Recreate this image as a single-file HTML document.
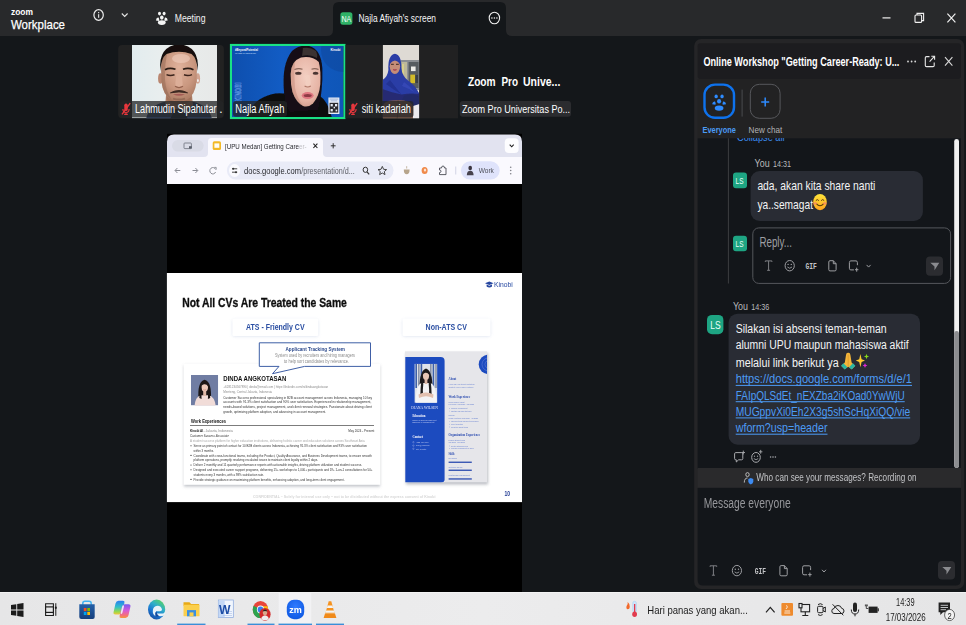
<!DOCTYPE html>
<html lang="id">
<head>
<meta charset="utf-8">
<title>Zoom Workplace</title>
<style>
html,body{margin:0;padding:0;background:#14171a;overflow:hidden}
body{width:966px;height:625px;position:relative;font-family:"Liberation Sans",sans-serif}
svg#ui{position:absolute;left:0;top:0;width:966px;height:625px;display:block}
svg text{font-family:"Liberation Sans",sans-serif}
.b{font-weight:bold}
</style>
</head>
<body>
<svg id="ui" width="966" height="625" viewBox="0 0 966 625">
<defs>
<filter id="bl1" x="-5%" y="-5%" width="110%" height="110%"><feGaussianBlur stdDeviation="0.7"/></filter>
<filter id="bl2" x="-5%" y="-5%" width="110%" height="110%"><feGaussianBlur stdDeviation="1.2"/></filter>
<filter id="bl05" x="-5%" y="-5%" width="110%" height="110%"><feGaussianBlur stdDeviation="0.4"/></filter>
<clipPath id="c1"><rect x="132" y="45" width="85" height="73.3"/></clipPath>
<clipPath id="c2"><rect x="232" y="46" width="111.4" height="71"/></clipPath>
<clipPath id="c3"><rect x="382.7" y="45" width="36.5" height="73.3"/></clipPath>
<linearGradient id="wall1" x1="0" x2="1" y1="0" y2="0"><stop offset="0" stop-color="#e2ecee"/><stop offset=".35" stop-color="#e9eeee"/><stop offset="1" stop-color="#e7e9e8"/></linearGradient>
<radialGradient id="skin1" cx=".5" cy=".35" r=".7"><stop offset="0" stop-color="#e0b29c"/><stop offset=".6" stop-color="#c9977f"/><stop offset="1" stop-color="#a87860"/></radialGradient>
<linearGradient id="blue2" x1="0" x2="1" y1="0" y2="0"><stop offset="0" stop-color="#0e4fae"/><stop offset=".45" stop-color="#125cc4"/><stop offset="1" stop-color="#0f56b8"/></linearGradient>
<radialGradient id="skin2" cx=".5" cy=".4" r=".7"><stop offset="0" stop-color="#f3cfc2"/><stop offset=".7" stop-color="#e6b3a4"/><stop offset="1" stop-color="#c99284"/></radialGradient>
</defs>
<!-- ===== BACKGROUND ===== -->
<rect x="0" y="0" width="966" height="625" fill="#14171a"/>

<!-- ===== TOP BAR ===== -->
<g id="topbar">
<rect x="0" y="0" width="966" height="36" fill="#28292b"/>
<path d="M327 36 Q333 36 333 30 L333 8 Q333 2 339 2 L500 2 Q506 2 506 8 L506 30 Q506 36 512 36 Z" fill="#14171a"/>
<text x="11" y="15.2" font-size="9.2" class="b" fill="#fff" textLength="22" lengthAdjust="spacingAndGlyphs">zoom</text>
<text x="11" y="29" font-size="13.5" fill="#fff" stroke="#fff" stroke-width=".25" textLength="54" lengthAdjust="spacingAndGlyphs">Workplace</text>
<!-- info -->
<ellipse cx="98.600" cy="15" rx="4.700" ry="5.300" fill="none" stroke="#ececec" stroke-width="1.200"/>
<rect x="98.1" y="14.2" width="1.1" height="3.6" fill="#e6e6e6"/><rect x="98.1" y="12" width="1.1" height="1.2" fill="#e6e6e6"/>
<path d="M121.8 13.5 L124.7 16.4 L127.6 13.5" fill="none" stroke="#e6e6e6" stroke-width="1.1"/>
<!-- meeting icon -->
<g fill="#f4f4f4"><ellipse cx="159.500" cy="13.600" rx="1.500" ry="1.800"/><ellipse cx="164.100" cy="13.600" rx="1.500" ry="1.800"/><ellipse cx="161.800" cy="17.600" rx="1.800" ry="2.100"/><path d="M155.900 20.400 Q156.300 17 158.600 17.500 Q159.600 19.200 159 20.900 Z"/><path d="M167.700 20.400 Q167.300 17 165 17.500 Q164 19.200 164.600 20.900 Z"/><ellipse cx="161.800" cy="22.600" rx="3.900" ry="2.300"/></g>
<text x="174.7" y="21.700" font-size="10.600" fill="#f2f2f2" textLength="30.800" lengthAdjust="spacingAndGlyphs">Meeting</text>
<!-- tab content -->
<rect x="340.4" y="12.2" width="12" height="12.6" rx="2.5" fill="#2fb267"/>
<text x="341.5" y="21.8" font-size="9" fill="#fff" textLength="9.8" lengthAdjust="spacingAndGlyphs">NA</text>
<text x="358.5" y="21.800" font-size="10.800" fill="#f5f5f5" textLength="77.500" lengthAdjust="spacingAndGlyphs">Najla Afiyah's screen</text>
<ellipse cx="494.4" cy="18" rx="5.2" ry="5.8" fill="none" stroke="#f0f0f0" stroke-width="1.1"/>
<circle cx="491.9" cy="18" r=".8" fill="#f0f0f0"/><circle cx="494.4" cy="18" r=".8" fill="#f0f0f0"/><circle cx="496.9" cy="18" r=".8" fill="#f0f0f0"/>
<!-- window controls -->
<rect x="882.5" y="17.3" width="8" height="1.2" fill="#f0f0f0"/>
<rect x="915" y="15" width="6.6" height="7.4" rx="1" fill="none" stroke="#f0f0f0" stroke-width="1.1"/>
<path d="M917 15 V13.4 H923.6 V20.6 H921.8" fill="none" stroke="#f0f0f0" stroke-width="1.1"/>
<path d="M947.4 13.6 L955.4 22.4 M955.4 13.6 L947.4 22.4" stroke="#f0f0f0" stroke-width="1.2" fill="none"/>
</g>

<!-- ===== THUMBNAILS ===== -->
<g id="thumbs">
<!-- tile 1 -->
<rect x="118.2" y="45" width="105.7" height="73.3" rx="4" fill="#222222"/>
<g clip-path="url(#c1)">
<rect x="132" y="45" width="85" height="73.3" fill="url(#wall1)"/>
<g filter="url(#bl1)">
<!-- shoulders/shirt -->
<path d="M146 119 Q149 105 166 101.500 L192 101.500 Q209 105 212 119 Z" fill="#36476c"/>
<path d="M170 119 L176 108 L182 108 L188 119 Z" fill="#1f2735"/>
<!-- neck -->
<path d="M166.500 90 L191.500 90 L193 106 Q179 113 165 106 Z" fill="#b4856d"/>
<path d="M166.500 96 Q179 106 191.500 96 L191.500 100 Q179 110 166.500 100 Z" fill="#96664f" opacity=".6"/>
<!-- ears -->
<ellipse cx="160.400" cy="78.500" rx="2.300" ry="5.200" fill="#b98670"/><ellipse cx="197.800" cy="78.500" rx="2.300" ry="5.200" fill="#d2a592"/>
<ellipse cx="197.900" cy="80.500" rx=".9" ry="1.500" fill="#f4f4f4"/>
<!-- face -->
<path d="M161 66 Q161 50 179 49 Q197 50 197 66 L196.500 82 Q195 95 187 99.800 Q179 103.500 171 99.800 Q163 95 161.500 82 Z" fill="url(#skin1)"/>
<!-- side shading -->
<path d="M161 66 Q161 54 168 51 Q164.500 62 165 80 Q166 92 172 100 Q163 95 161.500 82 Z" fill="#8f6450" opacity=".45"/>
<ellipse cx="181" cy="58.500" rx="9" ry="4.500" fill="#f3d2c2" opacity=".55"/>
<!-- hair -->
<path d="M160.300 71 Q158 46 179 44.300 Q200 46 197.700 71 Q197 58 191.500 54 Q179 49.500 166.500 54 Q161 58 160.300 71 Z" fill="#15110e"/>
<!-- brows/eyes -->
<path d="M165 69.800 Q169.500 67.300 175.500 69.300" stroke="#2a1c16" stroke-width="1.700" fill="none"/>
<path d="M183 69.300 Q188.500 67.300 193.500 69.800" stroke="#2a1c16" stroke-width="1.700" fill="none"/>
<path d="M166.500 74.600 Q170 76.300 174.500 74.800" stroke="#3a241c" stroke-width="1.500" fill="none"/>
<path d="M184 74.800 Q188 76.300 192 74.600" stroke="#3a241c" stroke-width="1.500" fill="none"/>
<!-- nose -->
<path d="M176.500 74 Q175 84 175.500 86 Q179 88 182.500 86 Q183 84 181.500 74 Z" fill="#dcae98"/>
<path d="M175 86.300 Q179 88.800 183 86.300" stroke="#94624e" stroke-width="1.200" fill="none"/>
<!-- moustache + mouth -->
<path d="M170.500 92.800 Q179 88.300 187.500 92.800 Q179 91 170.500 92.800 Z" fill="#3e2a22" stroke="#3e2a22" stroke-width="1"/>
<path d="M173 94.300 Q179 97.300 185 94.300 Q179 93.300 173 94.300 Z" fill="#a35a54"/>
<path d="M173 98.600 Q179 100.600 185 98.600" stroke="#7a5444" stroke-width="2" fill="none" opacity=".5"/>
</g>
</g>
<rect x="120" y="101" width="103.500" height="16.400" rx="3" fill="#242526" opacity=".76"/>
<g transform="translate(126 109)">
<path d="M-1.700 -3.800 Q-1.700 -5.400 0 -5.400 Q1.700 -5.400 1.700 -3.800 V0.400 Q1.700 2 0 2 Q-1.700 2 -1.700 0.400 Z" fill="#e8373d"/>
<path d="M-3.100 0 Q-3.100 3.500 0 3.500 Q3.100 3.500 3.100 0 M0 3.500 V5.400 M-1.800 5.400 H1.800" stroke="#e8373d" stroke-width="1.100" fill="none"/>
<path d="M-4 5.400 L4.200 -5.800" stroke="#e8373d" stroke-width="1.400"/>
</g>
<text x="135" y="113.200" font-size="12" fill="#fff" textLength="81.500" lengthAdjust="spacingAndGlyphs">Lahmudin Sipahutar</text>
<text x="219.300" y="113.200" font-size="12" fill="#fff">.</text>

<!-- tile 2 -->
<rect x="231" y="45" width="113.400" height="73" fill="none" stroke="#19e285" stroke-width="2.200"/>
<g clip-path="url(#c2)">
<rect x="232" y="46" width="111.400" height="71" fill="url(#blue2)"/>
<circle cx="343" cy="50" r="22" fill="#0e479c" opacity=".55"/>
<g filter="url(#bl1)">
<!-- body -->
<path d="M246 118 Q252 102 264 97 Q274 92 284 93.500 L320 96 Q328 101 332 118 Z" fill="#0d0c0e"/>
<!-- hijab -->
<path d="M284 92 Q281.500 64 292 51 Q299 44.500 309 46 Q321 49 322.300 68 Q323 92 318 110 L290 112 Q284.500 104 284 92 Z" fill="#141114"/>
<path d="M303 48 Q310 46.500 316 51 Q318 55 317 58 Q310 54 302 56 Z" fill="#5a4a48" opacity=".55"/>
<!-- face -->
<path d="M290.700 74 Q291 61 301 57.500 Q312 55.500 318.800 62 Q321 70 320.300 84 Q319.500 96 313 103.500 Q308 108 303 106 Q296 102 292.500 92 Q290.500 84 290.700 74 Z" fill="url(#skin2)"/>
<path d="M290.700 74 Q291 66 295 61 Q293.500 74 295 88 Q297 98 303 106 Q296 102 292.500 92 Q290.500 84 290.700 74 Z" fill="#c08878" opacity=".45"/>
<!-- brows/eyes -->
<path d="M294.500 69.600 Q298.500 67.800 302.500 69.300" stroke="#8a665a" stroke-width="1.100" fill="none"/>
<path d="M311.500 69.300 Q315 67.800 318.500 69.600" stroke="#8a665a" stroke-width="1.100" fill="none"/>
<ellipse cx="298.300" cy="73.200" rx="3.200" ry="1.500" fill="#4a3430"/>
<ellipse cx="315.600" cy="73.200" rx="2.900" ry="1.500" fill="#4a3430"/>
<!-- nose -->
<path d="M306.500 75 Q305 82 305.500 85 Q308 87 310.500 85 Q311 82 309.500 75 Z" fill="#f2cfc2" opacity=".8"/>
<path d="M304.600 86 Q307.700 88 310.800 86" stroke="#b07868" stroke-width="1.200" fill="none"/>
<!-- mouth -->
<ellipse cx="307.700" cy="95.600" rx="6" ry="3.500" fill="#df7680"/>
<ellipse cx="307.700" cy="95.400" rx="4" ry="1.500" fill="#8e3a44"/>
</g>
<!-- QR -->
<rect x="328.400" y="97.500" width="11" height="16.500" fill="#e6ecf6"/>
<rect x="329.600" y="98.600" width="8.600" height="1" fill="#9fb4d8"/><rect x="330.600" y="100.400" width="6.600" height=".9" fill="#9fb4d8"/>
<rect x="329.600" y="102.800" width="8.600" height="9.800" fill="#2a2a2e"/>
<rect x="330.600" y="104" width="2.200" height="2.400" fill="#e6ecf6"/><rect x="335" y="104" width="2.200" height="2.400" fill="#e6ecf6"/><rect x="330.600" y="109" width="2.200" height="2.400" fill="#e6ecf6"/><rect x="333.600" y="106.800" width="1.400" height="1.600" fill="#e6ecf6"/><rect x="335.600" y="109.600" width="1.600" height="1.800" fill="#e6ecf6"/>
<!-- small header texts -->
<text x="235" y="50.800" font-size="2.600" class="b" fill="#fff" textLength="23" lengthAdjust="spacingAndGlyphs">#BeyondPotential</text>
<text x="235" y="53.800" font-size="2.200" fill="#cfe0ff" textLength="21" lengthAdjust="spacingAndGlyphs">UP MEDAN WORKSHOP</text>
<text x="330.500" y="51" font-size="2.600" class="b" fill="#fff" textLength="10" lengthAdjust="spacingAndGlyphs">Kinobi</text>
<text transform="translate(240.500 101.500) rotate(-90)" font-size="9" class="b" fill="none" stroke="#6a9ee8" stroke-width=".6" textLength="19" lengthAdjust="spacingAndGlyphs">KINOBI</text>
</g>
<rect x="233" y="101" width="54" height="15.800" rx="3" fill="#242526" opacity=".76"/>
<text x="235.300" y="113.200" font-size="12" fill="#fff" textLength="49" lengthAdjust="spacingAndGlyphs">Najla Afiyah</text>

<!-- tile 3 -->
<rect x="345.500" y="45" width="112.600" height="73.300" fill="#212122"/>
<g clip-path="url(#c3)">
<rect x="382.700" y="45" width="36.500" height="73.300" fill="#dedad4"/>
<g filter="url(#bl05)">
<!-- cabinet -->
<rect x="400.500" y="60" width="19" height="30" fill="#8a8e92"/>
<rect x="401.500" y="62" width="5.600" height="26" fill="#bdb99a"/>
<rect x="402" y="64" width="2" height="10" fill="#d8cf8a"/>
<rect x="408.600" y="62" width="10" height="26" fill="#565b60"/>
<rect x="411" y="66.500" width="4.600" height="4.600" fill="#ecece8"/>
<rect x="410.300" y="74.600" width="4.800" height="8.600" fill="#d2bb2c"/>
<rect x="415.400" y="75" width="2.600" height="8" fill="#3a3f44"/>
<!-- body -->
<path d="M382 84 Q386 78 392 76 L404 80 Q414 84 419.500 94 L419.500 119 L382 119 Z" fill="#252c72"/>
<!-- hijab -->
<path d="M388.400 70 Q387.600 55 394.900 53.700 Q401.600 54.600 401.300 68 Q402 76 408 80.500 Q416 86 419 94 Q410 93 401.600 94.600 Q391 92.500 382.500 89 L382.500 80 Q387.600 77 388.400 70 Z" fill="#2b3da6"/>
<path d="M390 80 Q396 88 401.600 94.600 Q394 90 386 84 Z" fill="#1f2e8a" opacity=".7"/>
<path d="M404 82 Q410 86 414 92 Q408 88 402 86 Z" fill="#3a4ec0" opacity=".6"/>
<!-- face -->
<ellipse cx="394.900" cy="66.300" rx="5.200" ry="7.600" fill="#c58d78"/>
<path d="M389.700 64 Q389.900 57.500 394.900 57.300 Q400 57.500 400.100 64 Q397.500 60.500 394.900 60.500 Q392.300 60.500 389.700 64 Z" fill="#2b3da6"/>
<path d="M391 64.300 H393.800 M396 64.300 H398.800" stroke="#3e261e" stroke-width="1"/>
<path d="M393.200 69.600 Q394.900 70.600 396.600 69.600" stroke="#a8384a" stroke-width="1.200" fill="none"/>
<!-- arm and hands -->
<path d="M404 96 Q414 92 419.500 97 L419.500 107 Q410 109 400 104 Z" fill="#222968"/>
<path d="M383 106 Q384 101 392 100.500 Q402 99.500 408 101.500 Q413 103 413 108 L413 119 L383 119 Z" fill="#8a6452"/>
<path d="M398 100 Q399 106 397 119" stroke="#5e4236" stroke-width=".8" fill="none"/>
<path d="M413 106 L419.500 104 L419.500 119 L413 119 Z" fill="#ecebee"/>
</g>
</g>
<rect x="347" y="101" width="66.500" height="16.400" rx="3" fill="#242526" opacity=".76"/>
<g transform="translate(353 109)">
<path d="M-1.700 -3.800 Q-1.700 -5.400 0 -5.400 Q1.700 -5.400 1.700 -3.800 V0.400 Q1.700 2 0 2 Q-1.700 2 -1.700 0.400 Z" fill="#e8373d"/>
<path d="M-3.100 0 Q-3.100 3.500 0 3.500 Q3.100 3.500 3.100 0 M0 3.500 V5.400 M-1.800 5.400 H1.800" stroke="#e8373d" stroke-width="1.100" fill="none"/>
<path d="M-4 5.400 L4.200 -5.800" stroke="#e8373d" stroke-width="1.400"/>
</g>
<text x="361.700" y="113.200" font-size="12" fill="#fff" textLength="49.200" lengthAdjust="spacingAndGlyphs">siti kadariah</text>

<!-- tile 4 -->
<text y="85.700" font-size="13" class="b" fill="#fff"><tspan x="467.900" textLength="27.800" lengthAdjust="spacingAndGlyphs">Zoom</tspan><tspan x="501.500" textLength="16.500" lengthAdjust="spacingAndGlyphs">Pro</tspan><tspan x="523" textLength="37.300" lengthAdjust="spacingAndGlyphs">Unive...</tspan></text>
<rect x="459.800" y="101" width="111.200" height="15.700" rx="3" fill="#2b2c2f"/>
<text x="462" y="113" font-size="11.500" fill="#fff" textLength="108" lengthAdjust="spacingAndGlyphs">Zoom Pro Universitas Po...</text>
</g>

<!-- ===== SHARED SCREEN ===== -->
<g id="share">
<rect x="167" y="133.800" width="355" height="458.200" fill="#000"/>
<!-- browser chrome -->
<path d="M167 184 V141.500 Q167 134.500 174 134.500 H515 Q522 134.500 522 141.500 V184 Z" fill="#e2e3f0"/>
<path d="M167 184 V157 H204 Q208 157 208 153 V141.500 Q208 138 211.500 138 H319.500 Q323 138 323 141.500 V153 Q323 157 327 157 H522 V184 Z" fill="#faf9fe"/>
<g filter="url(#bl05)">
<rect x="172" y="140" width="31.700" height="11.600" rx="5.800" fill="#d9dbe6"/>
<rect x="184" y="143" width="7.400" height="5.600" rx=".8" fill="none" stroke="#6a6f7a" stroke-width=".8"/>
<rect x="189" y="146.200" width="2.800" height="2.400" fill="#5a5f6a"/>
<rect x="212.700" y="141.300" width="8.300" height="8.700" rx="1.600" fill="#f2b928"/>
<rect x="214.400" y="143.400" width="4.900" height="4.400" fill="#fffdf5"/>
<text x="225" y="148.600" font-size="8" fill="#2a2b30" textLength="81.500" lengthAdjust="spacingAndGlyphs">[UPU Medan] Getting Career-</text>
<rect x="299" y="139" width="10" height="14" fill="#faf9fe" opacity=".7"/>
<path d="M313.400 143.600 L317.400 148 M317.400 143.600 L313.400 148" stroke="#222" stroke-width="1.100"/>
<path d="M330.800 145.800 H335.600 M333.200 143.200 V148.400" stroke="#333" stroke-width="1"/>
<rect x="504.800" y="138.200" width="13.800" height="14.800" rx="4" fill="#fdfdff"/>
<path d="M509.700 144.600 L511.700 146.800 L513.700 144.600" stroke="#222" stroke-width="1.100" fill="none"/>
<!-- toolbar -->
<path d="M180.300 170.500 H175.200 M177.400 168 L175 170.500 L177.400 173" stroke="#8a8c94" stroke-width="1" fill="none"/>
<path d="M192.500 170.500 H197.600 M195.400 168 L197.800 170.500 L195.400 173" stroke="#8a8c94" stroke-width="1" fill="none"/>
<path d="M215.600 169.500 A3 3.200 0 1 0 215.600 172" stroke="#8a8c94" stroke-width="1" fill="none"/>
<path d="M214.300 167.400 H216.200 V169.600" stroke="#8a8c94" stroke-width=".9" fill="none"/>
<rect x="226.900" y="161.400" width="166.600" height="18.200" rx="9" fill="#e9ebf7"/>
<ellipse cx="234.600" cy="170.500" rx="5.600" ry="6.400" fill="#fbfbff"/>
<path d="M232 168.800 H237.200 M232 172.200 H237.200" stroke="#333" stroke-width=".9"/>
<circle cx="233.200" cy="168.800" r="1" fill="#333"/><circle cx="236" cy="172.200" r="1" fill="#333"/>
<text x="244" y="173.600" font-size="9" fill="#1f2024" textLength="57" lengthAdjust="spacingAndGlyphs">docs.google.com</text>
<text x="301.2" y="173.600" font-size="9" fill="#5f6168" textLength="53.6" lengthAdjust="spacingAndGlyphs">/presentation/d...</text>
<ellipse cx="365.400" cy="169.800" rx="2.300" ry="2.600" fill="none" stroke="#333" stroke-width="1"/><path d="M367 171.800 L369.200 174.300" stroke="#333" stroke-width="1.200"/>
<path d="M382.300 166.400 L383.600 169.300 L386.600 169.600 L384.300 171.600 L385 174.600 L382.300 173 L379.600 174.600 L380.300 171.600 L378 169.600 L381 169.300 Z" fill="none" stroke="#333" stroke-width=".9"/>
<path d="M403.800 169.500 H409.600 Q409.600 174.300 406.700 174.300 Q403.800 174.300 403.800 169.500 Z" fill="#b7a58c"/><path d="M406.700 166.200 V168.500" stroke="#b7a58c" stroke-width=".8"/>
<ellipse cx="424.600" cy="170.500" rx="3" ry="3.600" fill="#f08a4b"/><ellipse cx="425" cy="170" rx="1.200" ry="1.500" fill="#fde4d0"/>
<path d="M439.500 168 H441.500 Q441.500 166 443 166 Q444.500 166 444.500 168 H446 V174.600 H439.500 V172.600 Q441 172.600 441 171.300 Q441 170 439.500 170 Z" fill="none" stroke="#4a4c55" stroke-width=".9"/>
<rect x="455.400" y="166.500" width=".8" height="8" fill="#c8cbe0"/>
<rect x="461" y="161.200" width="38.700" height="18.400" rx="9.200" fill="#dfe3fb"/>
<ellipse cx="470.200" cy="168" rx="1.800" ry="2.200" fill="#3a3540"/><path d="M466.800 175.200 Q467 170.800 470.200 170.800 Q473.400 170.800 473.600 175.200 Z" fill="#46424e"/>
<text x="478.700" y="173.300" font-size="7.800" fill="#4a4c55" textLength="15.200" lengthAdjust="spacingAndGlyphs">Work</text>
<circle cx="510.700" cy="167.200" r=".8" fill="#808289"/><circle cx="510.700" cy="170.500" r=".8" fill="#808289"/><circle cx="510.700" cy="173.800" r=".8" fill="#808289"/>
</g>
<!-- slide -->
<rect x="166.900" y="273" width="355.100" height="229.100" fill="#fff"/>
<g id="slide">
<filter id="sh" x="-10%" y="-20%" width="120%" height="150%"><feGaussianBlur stdDeviation="1.6"/></filter>
<clipPath id="cph"><rect x="191" y="375" width="27.2" height="30.4"/></clipPath>
<clipPath id="cnv"><rect x="405" y="351.2" width="82" height="131.4"/></clipPath>
<clipPath id="cph2"><rect x="414.4" y="363.8" width="23" height="39"/></clipPath>
<g filter="url(#bl05)">
<path d="M485 283.2 L489.3 281.6 L493.6 283.2 L489.3 284.9 Z M486.6 284.6 V286.6 Q489.3 288.6 492 286.6 V284.6 L489.3 285.7 Z" fill="#2546a0"/>
<text x="494" y="287" font-size="6.8" fill="#2546a0" textLength="18.7" lengthAdjust="spacingAndGlyphs">Kinobi</text>
<text x="182.2" y="307.4" font-size="13.4" class="b" fill="#111" stroke="#111" stroke-width=".35" textLength="164.7" lengthAdjust="spacingAndGlyphs">Not All CVs Are Treated the Same</text>
<rect x="232.4" y="319.6" width="85.900" height="17" rx="2" fill="#c9d2e8" opacity=".6" filter="url(#sh)"/>
<rect x="232.400" y="318.600" width="85.900" height="17.400" rx="1.500" fill="#fff"/>
<text x="246" y="330.2" font-size="8.6" class="b" fill="#2a4ea2" textLength="58.6" lengthAdjust="spacingAndGlyphs">ATS - Friendly CV</text>
<rect x="402.5" y="319.6" width="88" height="17" rx="2" fill="#c9d2e8" opacity=".6" filter="url(#sh)"/>
<rect x="402.500" y="318.600" width="88" height="17.400" rx="1.500" fill="#fff"/>
<text x="425.6" y="330.2" font-size="8.6" class="b" fill="#2a4ea2" textLength="41.3" lengthAdjust="spacingAndGlyphs">Non-ATS CV</text>
<rect x="184" y="365.5" width="196" height="121" fill="#8a8f99" opacity=".55" filter="url(#sh)"/>
<rect x="183.600" y="363.800" width="196.700" height="121" fill="#fff"/>
<path d="M259.300 342.800 H370.500 V366.400 H304.600 L272.500 373.700 L279 366.400 H259.300 Z" fill="#fff" stroke="#3f5fa6" stroke-width="1"/>
<text x="285.5" y="351.1" font-size="6" class="b" fill="#2c4a8c" textLength="59.5" lengthAdjust="spacingAndGlyphs">Applicant Tracking System</text>
<text x="275" y="357.2" font-size="5" fill="#8a8a8a" textLength="80" lengthAdjust="spacingAndGlyphs">System used by recruiters and hiring managers</text>
<text x="284" y="362.8" font-size="5" fill="#8a8a8a" textLength="65" lengthAdjust="spacingAndGlyphs">to help sort candidates by relevance.</text>
<g clip-path="url(#cph)"><rect x="191" y="375" width="27.200" height="30.400" fill="#6f7da3"/>
<path d="M198.600 400 Q197 382 204.600 379.800 Q212.200 382 210.800 400 Z" fill="#1b1718"/>
<path d="M194.500 406 Q195.500 396.500 201 395.300 L208.500 395.300 Q214.500 396.500 215.800 406 Z" fill="#f1dcd8"/>
<rect x="203.200" y="391" width="3" height="5" fill="#e0b9a8"/>
<ellipse cx="204.700" cy="387.300" rx="3.300" ry="4.300" fill="#ecc9ba"/>
<path d="M201.200 386.500 Q201.200 382.300 204.700 382.300 Q208.300 382.300 208.200 386.500 Q206.500 383.800 204 384.300 Q202 384.600 201.200 386.500 Z" fill="#1b1718"/>
<path d="M199.300 398 Q199.600 390 201.300 386 L201.800 392 Q201.300 396 201.600 399 Z M210.200 398 Q209.900 390 208.200 386 L207.700 392 Q208.200 396 207.900 399 Z" fill="#1b1718"/>
<path d="M203.300 389.600 Q204.700 390.500 206.100 389.600" stroke="#c0706a" stroke-width=".5" fill="none"/>
</g>
<text x="223.3" y="381.4" font-size="7.2" class="b" fill="#111" textLength="63" lengthAdjust="spacingAndGlyphs">DINDA ANGKOTASAN</text>
<text x="223.3" y="387.6" font-size="3.4" fill="#8e8e8e" textLength="105" lengthAdjust="spacingAndGlyphs">+6281234567890 | dinda@email.com | https://linkedin.com/in/dindaangkotasan</text>
<text x="223.3" y="392.9" font-size="3.4" fill="#8e8e8e" textLength="48.7" lengthAdjust="spacingAndGlyphs">Menteng, Central Jakarta, Indonesia</text>
<text x="223.3" y="398.6" font-size="3.6" fill="#333" textLength="148.7" lengthAdjust="spacingAndGlyphs">Customer Success professional specializing in B2B account management across Indonesia, managing 10 key</text>
<text x="223.3" y="403.3" font-size="3.6" fill="#333" textLength="148" lengthAdjust="spacingAndGlyphs">accounts with 91.3% client satisfaction and 90% user satisfaction. Experienced in relationship management,</text>
<text x="223.3" y="408" font-size="3.6" fill="#333" textLength="148.5" lengthAdjust="spacingAndGlyphs">needs-based solutions, project management, and client renewal strategies. Passionate about driving client</text>
<text x="223.3" y="412.7" font-size="3.6" fill="#333" textLength="102.7" lengthAdjust="spacingAndGlyphs">growth, optimizing platform adoption, and advancing in account management.</text>
<text x="191" y="423.4" font-size="5.4" class="b" fill="#111" textLength="35" lengthAdjust="spacingAndGlyphs">Work Experiences</text>
<rect x="190" y="425.200" width="184" height=".7" fill="#444"/>
<text x="190" y="431.5" font-size="3.4" class="b" fill="#222" textLength="13" lengthAdjust="spacingAndGlyphs">Kinobi AI</text>
<text x="203.6" y="431.5" font-size="3.4" fill="#888" textLength="29.2" lengthAdjust="spacingAndGlyphs">- Jakarta, Indonesia</text>
<text x="348.3" y="431.5" font-size="3.4" fill="#333" textLength="26" lengthAdjust="spacingAndGlyphs">May 2024 - Present</text>
<text x="190" y="436.8" font-size="3.5" fill="#333" textLength="38.8" lengthAdjust="spacingAndGlyphs" font-style="italic">Customer Success Associate</text>
<text x="190" y="441.7" font-size="3.4" fill="#a8a8a8" textLength="174.6" lengthAdjust="spacingAndGlyphs">A student success platform for higher education institutions, delivering holistic career and education solutions across Southeast Asia</text>
<circle cx="191" cy="445.79999999999995" r=".55" fill="#222"/>
<text x="193.6" y="446.9" font-size="3.5" fill="#333" textLength="173.4" lengthAdjust="spacingAndGlyphs">Serve as primary point of contact for 10 B2B clients across Indonesia, achieving 91.3% client satisfaction and 93% user satisfaction</text>
<text x="193.6" y="451.7" font-size="3.5" fill="#333" textLength="20.4" lengthAdjust="spacingAndGlyphs">within 3 months.</text>
<circle cx="191" cy="455.4" r=".55" fill="#222"/>
<text x="193.6" y="456.5" font-size="3.5" fill="#333" textLength="178.3" lengthAdjust="spacingAndGlyphs">Coordinate with cross-functional teams, including the Product, Quality Assurance, and Business Development teams, to ensure smooth</text>
<text x="193.6" y="461.3" font-size="3.5" fill="#333" textLength="124.4" lengthAdjust="spacingAndGlyphs">platform operations, promptly resolving escalated issues to maintain client loyalty within 2 days.</text>
<circle cx="191" cy="465.0" r=".55" fill="#222"/>
<text x="193.6" y="466.1" font-size="3.5" fill="#333" textLength="168.4" lengthAdjust="spacingAndGlyphs">Deliver 2 monthly and 11 quarterly performance reports with actionable insights, driving platform utilization and student success.</text>
<circle cx="191" cy="469.79999999999995" r=".55" fill="#222"/>
<text x="193.6" y="470.9" font-size="3.5" fill="#333" textLength="179" lengthAdjust="spacingAndGlyphs">Designed and executed career support programs, delivering 15+ workshops to 1,000+ participants and 19+ 1-on-1 consultations for 50+</text>
<text x="193.6" y="475.7" font-size="3.5" fill="#333" textLength="70.4" lengthAdjust="spacingAndGlyphs">students every 3 months, with a 98% satisfaction rate.</text>
<circle cx="191" cy="479.4" r=".55" fill="#222"/>
<text x="193.6" y="480.5" font-size="3.5" fill="#333" textLength="150.9" lengthAdjust="spacingAndGlyphs">Provide strategic guidance on maximizing platform benefits, enhancing adoption, and long-term client engagement.</text>
<text x="253" y="498" font-size="4.2" class="b" fill="#d6d6d6" textLength="182.4" lengthAdjust="spacingAndGlyphs">CONFIDENTIAL – Solely for internal use only – not to be distributed without the express consent of Kinobi</text>
<text x="504.4" y="495.9" font-size="7" class="b" fill="#1f3a93" textLength="5.6" lengthAdjust="spacingAndGlyphs">10</text>
<rect x="406" y="353" width="82" height="131.400" fill="#8a8f99" opacity=".6" filter="url(#sh)"/>
<g clip-path="url(#cnv)">
<rect x="405" y="351.200" width="82" height="131.400" fill="#e6e6ea"/>
<path d="M405.300 357 H440.600 Q444.600 357 444.600 361 V479.300 Q444.600 482.600 441 482.600 H405.300 Z" fill="#1f4bbf"/>
<circle cx="488.500" cy="364.400" r="9.800" fill="#1f4bbf"/>
<circle cx="488.500" cy="364.400" r="6.500" fill="none" stroke="#5a7ad6" stroke-width=".6"/><circle cx="488.500" cy="364.400" r="3.600" fill="none" stroke="#5a7ad6" stroke-width=".6"/>
<g clip-path="url(#cph2)"><rect x="414.400" y="363.800" width="23" height="39" fill="#dfe3ea"/>
<rect x="415.4" y="364" width="1.600" height="24" fill="#3d5fa8"/>
<rect x="418" y="364" width="1.600" height="24" fill="#8a93a8"/>
<rect x="420.6" y="364" width="1.600" height="24" fill="#3d5fa8"/>
<rect x="430" y="364" width="1.600" height="24" fill="#8a93a8"/>
<rect x="432.6" y="364" width="1.600" height="24" fill="#3d5fa8"/>
<rect x="435.2" y="364" width="1.600" height="24" fill="#8a93a8"/>
<path d="M419.600 396 Q418.300 371 426 368.600 Q433.700 371 432.400 396 Z" fill="#1d1a1c"/>
<path d="M415.500 403 Q416 384.500 421.500 383 L430.500 383 Q436 384.500 436.800 403 Z" fill="#f3f3f5"/>
<rect x="424.600" y="379.500" width="2.800" height="4.500" fill="#dcb7a6"/>
<ellipse cx="426" cy="375.800" rx="3.100" ry="4.200" fill="#e8c6b6"/>
<path d="M422.700 375 Q422.700 370.600 426 370.600 Q429.400 370.600 429.300 375 Q427.600 372.300 425.300 372.800 Q423.400 373.100 422.700 375 Z" fill="#1d1a1c"/>
<path d="M420.400 394 Q420.600 382 422.800 374.500 L423.300 384 Q422.600 390 423 395 Z M431.600 394 Q431.400 382 429.200 374.500 L428.700 384 Q429.400 390 429 395 Z" fill="#1d1a1c"/>
<path d="M418.500 394.500 Q426 390.500 433.500 394.500 L433 398 Q426 394.500 419 398 Z" fill="#e2bfae"/>
</g>
<text x="411.2" y="409.3" font-size="3.8" style="font-family:'Liberation Serif',serif" fill="#dfe6fb" textLength="26.8" lengthAdjust="spacingAndGlyphs">DIANA WILSEN</text>
<text x="412.4" y="417.3" font-size="3.8" style="font-family:'Liberation Serif',serif" font-weight="bold" fill="#fff" textLength="13" lengthAdjust="spacingAndGlyphs">Education</text>
<text x="412.4" y="420.8" font-size="2.2" fill="#c5d2f5" textLength="24" lengthAdjust="spacingAndGlyphs">Bachelor of Business Management</text>
<text x="412.4" y="423.3" font-size="2.2" fill="#c5d2f5" textLength="22" lengthAdjust="spacingAndGlyphs">Bachelor of Management</text>
<text x="412.4" y="438.2" font-size="3.8" style="font-family:'Liberation Serif',serif" font-weight="bold" fill="#fff" textLength="10.6" lengthAdjust="spacingAndGlyphs">Contact</text>
<circle cx="413.400" cy="442.2" r=".7" fill="none" stroke="#c5d2f5" stroke-width=".3"/>
<text x="416" y="443" font-size="2.2" fill="#c5d2f5" textLength="12.5" lengthAdjust="spacingAndGlyphs">+123-456-7890</text>
<circle cx="413.400" cy="445.59999999999997" r=".7" fill="none" stroke="#c5d2f5" stroke-width=".3"/>
<text x="416" y="446.4" font-size="2.2" fill="#c5d2f5" textLength="13.5" lengthAdjust="spacingAndGlyphs">hello@email.com</text>
<circle cx="413.400" cy="448.8" r=".7" fill="none" stroke="#c5d2f5" stroke-width=".3"/>
<text x="416" y="449.6" font-size="2.2" fill="#c5d2f5" textLength="10.5" lengthAdjust="spacingAndGlyphs">City, Country</text>
<text x="448.6" y="380.4" font-size="3.8" style="font-family:'Liberation Serif',serif" font-weight="bold" fill="#2a4bb0" textLength="7.6" lengthAdjust="spacingAndGlyphs">About</text>
<text x="448.6" y="385.2" font-size="2.2" fill="#5f7bd0" textLength="26" lengthAdjust="spacingAndGlyphs">I am a final year student in strategic</text>
<text x="448.6" y="388.2" font-size="2.2" fill="#5f7bd0" textLength="25" lengthAdjust="spacingAndGlyphs">growth to exceed career outcome</text>
<text x="448.6" y="398.1" font-size="3.8" style="font-family:'Liberation Serif',serif" font-weight="bold" fill="#2a4bb0" textLength="21.6" lengthAdjust="spacingAndGlyphs">Work Experience</text>
<text x="448.6" y="403" font-size="2.1" fill="#5f7bd0" textLength="16" lengthAdjust="spacingAndGlyphs">Senior Media Analyst</text>
<text x="448.6" y="405.2" font-size="2.1" fill="#5f7bd0" textLength="25.4" lengthAdjust="spacingAndGlyphs">PT Kinobi | May 2023 - Mar 2025</text>
<circle cx="449.600" cy="408.40000000000003" r=".35" fill="#5f7bd0"/>
<text x="451" y="409.1" font-size="2.1" fill="#5f7bd0" textLength="16.5" lengthAdjust="spacingAndGlyphs">Improve engagement</text>
<circle cx="449.600" cy="411.0" r=".35" fill="#5f7bd0"/>
<text x="451" y="411.7" font-size="2.1" fill="#5f7bd0" textLength="20.5" lengthAdjust="spacingAndGlyphs">Maintain and build strategies</text>
<text x="448.6" y="416.3" font-size="2.1" fill="#5f7bd0" textLength="6" lengthAdjust="spacingAndGlyphs">Manager</text>
<text x="448.6" y="418.7" font-size="2.1" fill="#5f7bd0" textLength="29.4" lengthAdjust="spacingAndGlyphs">Kinobi Ventures | Jan 2022 - Apr 2023</text>
<circle cx="449.600" cy="421.5" r=".35" fill="#5f7bd0"/>
<text x="451" y="422.2" font-size="2.1" fill="#5f7bd0" textLength="27.6" lengthAdjust="spacingAndGlyphs">Implement and document procedures</text>
<circle cx="449.600" cy="424.2" r=".35" fill="#5f7bd0"/>
<text x="451" y="424.9" font-size="2.1" fill="#5f7bd0" textLength="12" lengthAdjust="spacingAndGlyphs">Meet monthly</text>
<circle cx="449.600" cy="426.90000000000003" r=".35" fill="#5f7bd0"/>
<text x="451" y="427.6" font-size="2.1" fill="#5f7bd0" textLength="17" lengthAdjust="spacingAndGlyphs">Lead the audit team</text>
<text x="448.6" y="435.8" font-size="3.8" style="font-family:'Liberation Serif',serif" font-weight="bold" fill="#2a4bb0" textLength="31.4" lengthAdjust="spacingAndGlyphs">Organization Experience</text>
<text x="448.6" y="440.6" font-size="2.1" fill="#5f7bd0" textLength="16.4" lengthAdjust="spacingAndGlyphs">Design Student Club</text>
<text x="448.6" y="442.7" font-size="2.1" fill="#5f7bd0" textLength="16.4" lengthAdjust="spacingAndGlyphs">Jan 2019 - Dec 2019</text>
<circle cx="449.600" cy="445.90000000000003" r=".35" fill="#5f7bd0"/>
<text x="451" y="446.6" font-size="2.1" fill="#5f7bd0" textLength="17" lengthAdjust="spacingAndGlyphs">Create Instagram Feed</text>
<circle cx="449.600" cy="448.3" r=".35" fill="#5f7bd0"/>
<text x="451" y="449" font-size="2.1" fill="#5f7bd0" textLength="23" lengthAdjust="spacingAndGlyphs">Increase engagement by 200%</text>
<text x="448.6" y="454.7" font-size="3.8" style="font-family:'Liberation Serif',serif" font-weight="bold" fill="#2a4bb0" textLength="6" lengthAdjust="spacingAndGlyphs">Skills</text>
<text x="448.6" y="459.2" font-size="2.1" fill="#5f7bd0" textLength="8.4" lengthAdjust="spacingAndGlyphs">MS Office</text>
<rect x="448.600" y="461.59999999999997" width="23.200" height="1.300" fill="#2a4bb0"/>
<text x="448.6" y="467.5" font-size="2.1" fill="#5f7bd0" textLength="14" lengthAdjust="spacingAndGlyphs">Customer Service</text>
<rect x="448.600" y="469.59999999999997" width="23.200" height="1.300" fill="#2a4bb0"/>
<text x="448.6" y="475.7" font-size="2.1" fill="#5f7bd0" textLength="21.5" lengthAdjust="spacingAndGlyphs">Relationship Management</text>
<rect x="448.600" y="478.29999999999995" width="23.200" height="1.300" fill="#2a4bb0"/>
</g>
</g>
</g>
</g>

<!-- ===== CHAT PANEL ===== -->
<g id="chat">
<rect x="694.200" y="39" width="270" height="550" rx="7" fill="#252527"/>
<rect x="697.600" y="43.200" width="263.400" height="35.800" rx="3" fill="#1c1c1f"/>
<rect x="697.600" y="79" width="263.400" height="59.300" fill="#222223"/>
<text x="703.4" y="65.6" font-size="12" class="b" fill="#fff" textLength="196" lengthAdjust="spacingAndGlyphs">Online Workshop "Getting Career-Ready: U...</text>
<circle cx="908" cy="61.500" r=".9" fill="#d8d8d8"/><circle cx="911.600" cy="61.500" r=".9" fill="#d8d8d8"/><circle cx="915.200" cy="61.500" r=".9" fill="#d8d8d8"/>
<path d="M929.500 56.600 H926.500 Q925.300 56.600 925.300 57.800 V65.400 Q925.300 66.600 926.500 66.600 H933 Q934.200 66.600 934.200 65.400 V62.500" fill="none" stroke="#e6e6e6" stroke-width="1.100"/><path d="M931.300 56.200 H934.600 V59.800 M934.400 56.400 L929.600 61.700" fill="none" stroke="#e6e6e6" stroke-width="1.100"/>
<path d="M945 57.200 L952.400 65.700 M952.400 57.200 L945 65.700" stroke="#d8d8d8" stroke-width="1.100"/>
<rect x="704.500" y="84.600" width="29.500" height="33.200" rx="10.500" fill="none" stroke="#0e72ed" stroke-width="2.400"/>
<g fill="#2e8bff" transform="translate(719.100 102.200) scale(1.180) translate(-719.100 -102.200)"><ellipse cx="716.600" cy="97.300" rx="1.400" ry="1.600"/><ellipse cx="721.600" cy="97.300" rx="1.400" ry="1.600"/><ellipse cx="719.100" cy="101.400" rx="1.700" ry="1.900"/><path d="M713.200 104 Q713.600 101.200 715.600 101.600 Q716.600 103 716 104.400 Z"/><path d="M725 104 Q724.600 101.200 722.600 101.600 Q721.600 103 722.200 104.400 Z"/><ellipse cx="719.100" cy="107.200" rx="3.700" ry="2.200"/></g>
<rect x="741.600" y="89.600" width="1" height="27" fill="#4a4b4f"/>
<rect x="750.300" y="84.300" width="29.800" height="34" rx="9" fill="none" stroke="#57585c" stroke-width="1"/>
<path d="M761.200 102 H769.200 M765.200 97.400 V106.600" stroke="#2e8bff" stroke-width="1.500"/>
<text x="702.5" y="133" font-size="9.6" class="b" fill="#4b9bf5" textLength="33.4" lengthAdjust="spacingAndGlyphs">Everyone</text>
<text x="748.6" y="133" font-size="9.6" fill="#b4b4b6" textLength="33.6" lengthAdjust="spacingAndGlyphs">New chat</text>
<clipPath id="cmsg"><rect x="697.600" y="138" width="263.400" height="330.900"/></clipPath>
<rect x="697.600" y="138.300" width="263.400" height="330.600" fill="#13161a"/>
<g clip-path="url(#cmsg)">
<rect x="727.900" y="138.300" width="1" height="145.200" fill="#3c3d41"/>
<text x="737" y="141.2" font-size="11.5" fill="#3c8cf0" textLength="47.5" lengthAdjust="spacingAndGlyphs">Collapse all</text>
<text x="754.6" y="167.2" font-size="10.5" fill="#b9babd" textLength="15" lengthAdjust="spacingAndGlyphs">You</text>
<text x="772.9" y="167.2" font-size="9.6" fill="#b9babd" textLength="18" lengthAdjust="spacingAndGlyphs">14:31</text>
<rect x="733" y="172.600" width="14" height="15.600" rx="3" fill="#1ea583"/>
<text x="735.6" y="183.6" font-size="8.6" fill="#e9fff8" textLength="7.9" lengthAdjust="spacingAndGlyphs">LS</text>
<rect x="750.600" y="171" width="172.300" height="50" rx="9" fill="#292c34"/>
<text x="757.4" y="190.2" font-size="12.6" fill="#f4f4f4" textLength="118" lengthAdjust="spacingAndGlyphs">ada, akan kita share nanti</text>
<text x="757.4" y="209.3" font-size="12.6" fill="#f4f4f4" textLength="55.6" lengthAdjust="spacingAndGlyphs">ya..semagat</text>
<g><linearGradient id="emj" x1="0" x2="0" y1="0" y2="1"><stop offset="0" stop-color="#ffe53a"/><stop offset="1" stop-color="#ffa51e"/></linearGradient><ellipse cx="820" cy="202.100" rx="6.800" ry="8.100" fill="url(#emj)"/><path d="M815.800 200.600 Q817.300 198.600 818.800 200.600 M821.200 200.600 Q822.700 198.600 824.200 200.600" stroke="#5a3c0c" stroke-width="1" fill="none"/><path d="M816.300 203.600 Q820 207.800 823.700 203.600" stroke="#5a3c0c" stroke-width="1.100" fill="none"/><ellipse cx="815.200" cy="203.400" rx="1.700" ry="1.200" fill="#f5806a" opacity=".75"/><ellipse cx="824.800" cy="203.400" rx="1.700" ry="1.200" fill="#f5806a" opacity=".75"/></g>
<rect x="733" y="235.700" width="14" height="15.600" rx="3" fill="#1ea583"/>
<text x="735.6" y="246.7" font-size="8.6" fill="#e9fff8" textLength="7.9" lengthAdjust="spacingAndGlyphs">LS</text>
<rect x="752.800" y="227.900" width="197.800" height="55.500" rx="6" fill="#13161a" stroke="#55575c" stroke-width="1"/>
<text x="759.4" y="246.6" font-size="14" fill="#9d9ea2" textLength="32.5" lengthAdjust="spacingAndGlyphs">Reply...</text>
<path d="M765.3000000000001 261.9 V260.9 H771.9 V261.9 M768.6 260.9 V270.3 M767.1 270.3 H770.1" fill="none" stroke="#7e7f84" stroke-width="1"/><ellipse cx="789.7" cy="265.7" rx="4.600" ry="5.200" fill="none" stroke="#9d9ea2" stroke-width="1"/><circle cx="788.1" cy="264.4" r=".7" fill="#9d9ea2"/><circle cx="791.3000000000001" cy="264.4" r=".7" fill="#9d9ea2"/><path d="M787.4000000000001 267.0 Q789.7 269.5 792.0 267.0" fill="none" stroke="#9d9ea2" stroke-width=".9"/><text x="805.4" y="269.0" font-size="9" class="b" fill="#c4c5c8" textLength="11.400" lengthAdjust="spacingAndGlyphs" style="font-family:'Liberation Mono',monospace">GIF</text><path d="M828.8000000000001 261.9 Q828.8000000000001 260.7 830.0000000000001 260.7 H833.3000000000001 L836.1 263.7 V269.7 Q836.1 270.9 834.9000000000001 270.9 H830.0000000000001 Q828.8000000000001 270.9 828.8000000000001 269.7 Z M833.3000000000001 260.7 V263.7 H836.1" fill="none" stroke="#9d9ea2" stroke-width="1"/><path d="M857.4 265.2 V262.5 Q857.4 260.9 856.0 260.9 H850.8 Q849.4 260.9 849.4 262.5 V268.3 Q849.4 269.9 850.8 269.9 H853.9" fill="none" stroke="#9d9ea2" stroke-width="1"/><path d="M855.0 269.7 H858.4 M856.6999999999999 267.7 V271.7" stroke="#9d9ea2" stroke-width="1"/><path d="M866.6 264.9 L868.6 267.09999999999997 L870.6 264.9" fill="none" stroke="#9d9ea2" stroke-width="1"/>
<rect x="926" y="256.600" width="17" height="19.100" rx="4" fill="#2b2c30"/>
<path d="M930.300 262.700 H939.300 L934.500 270.300 V266.400 Z" fill="#8a8b8f"/>
<text x="732.9" y="310" font-size="10.5" fill="#b9babd" textLength="15" lengthAdjust="spacingAndGlyphs">You</text>
<text x="751.2" y="310" font-size="9.6" fill="#b9babd" textLength="18" lengthAdjust="spacingAndGlyphs">14:36</text>
<rect x="707" y="314.900" width="16.400" height="19.400" rx="5" fill="#1ea583"/>
<text x="710.2" y="329" font-size="10" fill="#e9fff8" textLength="10.4" lengthAdjust="spacingAndGlyphs">LS</text>
<rect x="728.600" y="313.700" width="191.400" height="131" rx="9" fill="#292c34"/>
<text x="735.7" y="332.9" font-size="12.3" fill="#f4f4f4" textLength="151" lengthAdjust="spacingAndGlyphs">Silakan isi absensi teman-teman</text>
<text x="735.7" y="349" font-size="12.3" fill="#f4f4f4" textLength="173" lengthAdjust="spacingAndGlyphs">alumni UPU maupun mahasiswa aktif</text>
<text x="735.7" y="367.2" font-size="12.3" fill="#f4f4f4" textLength="103" lengthAdjust="spacingAndGlyphs">melalui link berikut ya</text>
<g><path d="M848.200 352.800 Q850.200 352.600 850.400 355 L851.600 362.500 L855 366 L851.800 369.200 L848.200 366.800 L844.600 369.200 L841.400 366 L844.800 362.500 L846 355 Q846.200 352.600 848.200 352.800 Z" fill="#f4b63a"/><path d="M841 365.800 L844.800 369.600 L847.400 367.300 L843.400 363.300 Z M855.400 365.800 L851.600 369.600 L849 367.300 L853 363.300 Z" fill="#2bb5a3"/><path d="M848.200 354.500 V366.500" stroke="#d9922a" stroke-width=".7"/></g>
<g><path d="M860.400 354 L861.600 359.200 L865 360.600 L861.600 362 L860.400 367.200 L859.200 362 L855.800 360.600 L859.200 359.200 Z" fill="#ffca2e"/><path d="M866.500 353.800 L867.200 355.800 L869.100 356.500 L867.200 357.200 L866.500 359.200 L865.800 357.200 L863.900 356.500 L865.800 355.800 Z" fill="#86d81a"/><path d="M865 363 L865.700 364.800 L867.400 365.500 L865.700 366.200 L865 368 L864.300 366.200 L862.600 365.500 L864.300 364.800 Z" fill="#e02ad8"/></g>
<text x="735.7" y="383.4" font-size="12.4" fill="#4c9bf5" textLength="176.3" lengthAdjust="spacingAndGlyphs">https://docs.google.com/forms/d/e/1</text>
<rect x="735.700" y="384.9" width="176.3" height="1" fill="#4c9bf5"/>
<text x="735.7" y="399.7" font-size="12.4" fill="#4c9bf5" textLength="169" lengthAdjust="spacingAndGlyphs">FAIpQLSdEt_nEXZba2iKOad0YwWjU</text>
<rect x="735.700" y="401.2" width="169" height="1" fill="#4c9bf5"/>
<text x="735.7" y="415.9" font-size="12.4" fill="#4c9bf5" textLength="174.5" lengthAdjust="spacingAndGlyphs">MUGppvXi0Eh2X3g5shScHqXiQQ/vie</text>
<rect x="735.700" y="417.4" width="174.5" height="1" fill="#4c9bf5"/>
<text x="735.7" y="432.2" font-size="12.4" fill="#4c9bf5" textLength="91.8" lengthAdjust="spacingAndGlyphs">wform?usp=header</text>
<rect x="735.700" y="433.7" width="91.8" height="1" fill="#4c9bf5"/>
<path d="M735.800 452.600 H741.600 Q742.800 452.600 742.800 453.800 V458.600 Q742.800 459.800 741.600 459.800 H738.600 L736.300 462 V459.800 H735.800 Q734.600 459.800 734.600 458.600 V453.800 Q734.600 452.600 735.800 452.600 Z" fill="none" stroke="#a8a9ad" stroke-width="1"/><path d="M741.600 452.500 H745 M743.300 450.600 V454.400" stroke="#a8a9ad" stroke-width=".9"/>
<ellipse cx="756" cy="457.400" rx="4.300" ry="4.900" fill="none" stroke="#a8a9ad" stroke-width="1"/><circle cx="754.500" cy="456.200" r=".6" fill="#a8a9ad"/><circle cx="757.500" cy="456.200" r=".6" fill="#a8a9ad"/><path d="M753.800 458.600 Q756 460.800 758.200 458.600" fill="none" stroke="#a8a9ad" stroke-width=".8"/><path d="M759 451.800 H762.400 M760.700 449.900 V453.700" stroke="#a8a9ad" stroke-width=".9"/>
<circle cx="770.600" cy="457" r=".8" fill="#a8a9ad"/><circle cx="773" cy="457" r=".8" fill="#a8a9ad"/><circle cx="775.400" cy="457" r=".8" fill="#a8a9ad"/>
<rect x="954.200" y="139" width="4.800" height="329" rx="2.400" fill="#f1f1f1"/>
<rect x="954.200" y="331" width="4.800" height="137" rx="2.400" fill="#8c8d90"/>
</g>
<rect x="697.600" y="468" width="263.400" height="19.300" fill="#2a2a2c"/>
<ellipse cx="747.500" cy="474.600" rx="1.700" ry="2" fill="none" stroke="#c8c8c8" stroke-width=".9"/><path d="M744.300 482.600 Q744.300 478 747.500 478" fill="none" stroke="#c8c8c8" stroke-width=".9"/><path d="M748.300 479 L750.800 478 L753.300 479 V481.500 Q753.300 483.600 750.800 484.500 Q748.300 483.600 748.300 481.500 Z" fill="#3d8bf2"/>
<text x="756.3" y="481" font-size="10.6" fill="#c2c3c6" textLength="160.3" lengthAdjust="spacingAndGlyphs">Who can see your messages? Recording on</text>
<path d="M697.600 488 H961 V580 Q961 585.500 955.500 585.500 H703 Q697.600 585.500 697.600 580 Z" fill="#13161a"/>
<text x="703.7" y="507.6" font-size="14" fill="#96979b" textLength="87" lengthAdjust="spacingAndGlyphs">Message everyone</text>
<path d="M710.1 566.8000000000001 V565.8000000000001 H716.6999999999999 V566.8000000000001 M713.4 565.8000000000001 V575.2 M711.9 575.2 H714.9" fill="none" stroke="#7e7f84" stroke-width="1"/><ellipse cx="736.9" cy="570.6" rx="4.600" ry="5.200" fill="none" stroke="#9d9ea2" stroke-width="1"/><circle cx="735.3" cy="569.3000000000001" r=".7" fill="#9d9ea2"/><circle cx="738.5" cy="569.3000000000001" r=".7" fill="#9d9ea2"/><path d="M734.6 571.9 Q736.9 574.4 739.1999999999999 571.9" fill="none" stroke="#9d9ea2" stroke-width=".9"/><text x="754.6999999999999" y="573.9" font-size="9" class="b" fill="#c4c5c8" textLength="11.400" lengthAdjust="spacingAndGlyphs" style="font-family:'Liberation Mono',monospace">GIF</text><path d="M779.9 566.8000000000001 Q779.9 565.6 781.1 565.6 H784.4 L787.1999999999999 568.6 V574.6 Q787.1999999999999 575.8000000000001 786.0 575.8000000000001 H781.1 Q779.9 575.8000000000001 779.9 574.6 Z M784.4 565.6 V568.6 H787.1999999999999" fill="none" stroke="#9d9ea2" stroke-width="1"/><path d="M810.6 570.1 V567.4 Q810.6 565.8000000000001 809.2 565.8000000000001 H804.0 Q802.6 565.8000000000001 802.6 567.4 V573.2 Q802.6 574.8000000000001 804.0 574.8000000000001 H807.1" fill="none" stroke="#9d9ea2" stroke-width="1"/><path d="M808.2 574.6 H811.6 M809.9 572.6 V576.6" stroke="#9d9ea2" stroke-width="1"/><path d="M822.0 569.8000000000001 L824.0 572.0 L826.0 569.8000000000001" fill="none" stroke="#9d9ea2" stroke-width="1"/>
<rect x="938" y="561" width="17" height="18.600" rx="4" fill="#2b2c30"/>
<path d="M942.300 567 H951.300 L946.500 574.600 V570.700 Z" fill="#8a8b8f"/>
</g>

<!-- ===== TASKBAR ===== -->
<g id="taskbar">
<linearGradient id="tbg" x1="0" x2="1" y1="0" y2="0"><stop offset="0" stop-color="#e6e6e7"/><stop offset=".5" stop-color="#ececed"/><stop offset="1" stop-color="#e5e5e6"/></linearGradient>
<rect x="0" y="592" width="966" height="33" fill="url(#tbg)"/>
<rect x="0" y="592" width="966" height="1" fill="#f7f7f7" opacity=".7"/>
<rect x="278.700" y="593" width="32.500" height="32" fill="#f2f2f4"/>
<g fill="#1b1b1b"><path d="M11 605 L16.300 604.200 V609.500 H11 Z M17.200 604 L23.500 603 V609.500 H17.200 Z M11 610.400 H16.300 V615.700 L11 615 Z M17.200 610.400 H23.500 V617 L17.200 616 Z"/></g>
<g fill="none" stroke="#1e1e1e" stroke-width="1.200"><rect x="45.600" y="606.900" width="7.800" height="5.500"/><path d="M45.600 606.900 V603.800 H53.400 V606.900 M45.600 612.400 V615.500 H53.400 V612.400" stroke-width="1.100"/><path d="M55.800 603.200 V615.800" stroke-width="1"/><ellipse cx="55.800" cy="607.800" rx="1" ry="1.200" fill="#1e1e1e" stroke="none"/></g>
<g><linearGradient id="stg" x1="0" x2="0" y1="0" y2="1"><stop offset="0" stop-color="#2460a8"/><stop offset="1" stop-color="#173f7c"/></linearGradient><path d="M82.800 605 V603.400 Q82.800 601.300 85 601.300 H89 Q91.200 601.300 91.200 603.400 V605" fill="none" stroke="#3fb2f2" stroke-width="1.500"/><path d="M79.300 604.300 H94.700 V617 Q94.700 619 92.700 619 H81.300 Q79.300 619 79.300 617 Z" fill="url(#stg)"/><rect x="83.800" y="608" width="2.700" height="3.100" fill="#f25022"/><rect x="87.300" y="608" width="2.700" height="3.100" fill="#7fba00"/><rect x="83.800" y="611.900" width="2.700" height="3.100" fill="#00a4ef"/><rect x="87.300" y="611.900" width="2.700" height="3.100" fill="#ffb900"/></g>
<linearGradient id="cp1" x1="0" x2="0" y1="0" y2="1"><stop offset="0" stop-color="#2a7df0"/><stop offset=".45" stop-color="#2fc0c8"/><stop offset=".8" stop-color="#9bd84a"/><stop offset="1" stop-color="#f5c53a"/></linearGradient>
<linearGradient id="cp2" x1="0" x2="0" y1="0" y2="1"><stop offset="0" stop-color="#7a5af0"/><stop offset=".45" stop-color="#d65ad8"/><stop offset=".8" stop-color="#f5707a"/><stop offset="1" stop-color="#f59a3a"/></linearGradient>
<g><path d="M118.500 600.800 H123 Q125 600.800 124.400 603 L122 612.500 Q121.300 614.500 119 614.500 H115.500 Q113 614.500 113.600 612 L115.500 603.500 Q116.200 600.800 118.500 600.800 Z" fill="url(#cp1)"/><path d="M125 604.300 H128.500 Q131 604.300 130.400 606.800 L128.500 615.300 Q127.800 618 125.500 618 H121 Q119 618 119.600 615.800 L122 606.300 Q122.700 604.300 125 604.300 Z" fill="url(#cp2)"/><path d="M122.600 605.500 Q124 604.600 124 606.500 L122.300 613 Q121.600 614.600 120.600 613.600 L122 607 Z" fill="#f4f6fb" opacity=".9"/></g>
<linearGradient id="ed1" x1=".8" x2=".2" y1="0" y2="1"><stop offset="0" stop-color="#5bd45a"/><stop offset=".35" stop-color="#2fb0c8"/><stop offset=".65" stop-color="#1c78d2"/><stop offset="1" stop-color="#17489a"/></linearGradient>
<g><ellipse cx="156.600" cy="609.500" rx="8.600" ry="10" fill="url(#ed1)"/><path d="M165.200 610.500 Q165.400 613.600 161.500 613.600 H156.600 Q157.300 616.800 162.500 616 Q166 614.800 165.200 610.500 Z" fill="#e9f2f8"/><path d="M152.800 611 Q153 606 157.500 605.800 Q161.300 606 162 609.500 Q162 611.300 160 611.300 H156.300 Q154.500 613 155.600 616 Q152.600 614.500 152.800 611 Z" fill="#e9f2f8"/><path d="M155.600 616 Q154.500 613 156.300 611.300 Q156.600 614.600 159 616.300 Q157 617 155.600 616 Z" fill="#17489a"/></g>
<g transform="translate(.5 -1.200)"><path d="M183 603.500 H189 L190.600 605.300 H198.600 V607 H183 Z" fill="#e8a915"/><rect x="183" y="606" width="16" height="11.500" rx=".6" fill="#fbcf4c"/><path d="M186.500 611.300 H195.500 V617.500 H186.500 Z" fill="#3b8fe0"/><rect x="189" y="613.600" width="4" height="3.900" fill="#fbcf4c"/></g>
<g><rect x="218.300" y="600" width="15" height="17.500" fill="#f1f6fd" stroke="#86a6dc" stroke-width=".7"/><rect x="218.700" y="600.400" width="6" height="16.700" fill="#c4d8f6"/><path d="M226 611.500 H232 M226 613.500 H232 M223 615.500 H232" stroke="#a9bee6" stroke-width=".6"/><text x="219" y="613.800" font-size="13" class="b" fill="#1d4da6" textLength="11.500" lengthAdjust="spacingAndGlyphs">W</text></g>
<g><ellipse cx="260.500" cy="609.500" rx="7.800" ry="8.600" fill="#e9453a"/><path d="M260.500 609.500 L253.600 605.800 Q251.800 610.500 254 614.500 Q256.500 618.300 260.800 618.100 L264.300 611.500 Z" fill="#2da44f"/><path d="M260.500 609.500 L264.300 611.500 L260.800 618.100 Q266 617.800 267.800 612.500 Q268.600 609.500 267.600 606.300 H261 Z" fill="#fbbd12"/><ellipse cx="260.500" cy="609.500" rx="3.600" ry="4" fill="#f4f8fd"/><ellipse cx="260.500" cy="609.500" rx="2.800" ry="3.100" fill="#3a7df0"/><ellipse cx="265" cy="614.300" rx="5.600" ry="6.400" fill="#d22a2a"/><ellipse cx="265" cy="612.600" rx="2.200" ry="2.800" fill="#d9a98c"/><path d="M262.800 611.600 Q263 609.400 265 609.400 Q267 609.400 267.200 611.600 Q265 610.400 262.800 611.600 Z" fill="#2a1e1a"/><path d="M261.200 619.300 Q261.600 615.600 265 615.600 Q268.400 615.600 268.800 619.300 Q265 621.300 261.200 619.300 Z" fill="#eeeeee"/></g>
<g><radialGradient id="zmg" cx=".5" cy=".35" r=".75"><stop offset="0" stop-color="#2f7bff"/><stop offset="1" stop-color="#0b55e0"/></radialGradient><rect x="286.800" y="599.800" width="17.400" height="19.400" rx="7.200" fill="url(#zmg)"/><text x="289.300" y="613.200" font-size="9.200" class="b" fill="#fff" textLength="12.600" lengthAdjust="spacingAndGlyphs">zm</text></g>
<g><path d="M323.600 618 L325 613.500 H335 L336.400 618 Z" fill="#f08a1a"/><path d="M328.700 601.300 H331.300 L334.600 613.500 H325.400 Z" fill="#f5921f"/><path d="M327.600 605.500 H332.400 L333.100 608.100 H326.900 Z" fill="#f4f4f4"/><path d="M326.200 610.600 H333.800 L334.400 612.800 H325.600 Z" fill="#f4f4f4"/></g>
<rect x="177.2" y="623.600" width="28.3" height="1.700" fill="#3a8fd8"/>
<rect x="247.5" y="623.600" width="27" height="1.700" fill="#3a8fd8"/>
<rect x="278.5" y="623.600" width="33.5" height="1.700" fill="#3a8fd8"/>
<rect x="316" y="623.600" width="28" height="1.700" fill="#3a8fd8"/>
<g><path d="M626.600 606 Q628.300 603.800 627.600 602 Q630.300 604 629.800 607 Q629.600 609.300 627.800 609.300 Q625.800 609 626.600 606 Z" fill="#f2692a"/><rect x="632.800" y="601.300" width="3.600" height="11" rx="1.800" fill="#cfe6fa" stroke="#9ccdf2" stroke-width=".5"/><rect x="634" y="604" width="1.300" height="9" fill="#e23b4e"/><ellipse cx="634.600" cy="614.300" rx="2.400" ry="2.700" fill="#e23b4e"/></g>
<text x="647.3" y="613.9" font-size="11.5" fill="#1c1c1c" textLength="100.6" lengthAdjust="spacingAndGlyphs">Hari panas yang akan...</text>
<path d="M766 612.300 L770.300 607.300 L774.600 612.300" fill="none" stroke="#222" stroke-width="1.200"/>
<g><rect x="781.400" y="603" width="11.600" height="12.700" rx="1" fill="#ee8b2e"/><path d="M784.600 611 H790 M784.300 613 H790.300 M786 609 Q788.500 607 786.500 605.300" stroke="#fff" stroke-width=".8" fill="none"/></g>
<g fill="none" stroke="#222" stroke-width="1.100"><rect x="801" y="604.500" width="8.600" height="7.300"/><path d="M805.300 611.800 V615.300 M802.300 615.500 H808.300"/><rect x="799" y="603.500" width="3" height="4.300" fill="#e9ebed"/></g>
<g fill="none" stroke="#222" stroke-width="1"><rect x="817.600" y="606.300" width="5.400" height="6.400" rx="1"/><path d="M823 608.500 L825.300 607 V612 L823 610.500"/><path d="M818 604.600 Q820.300 602.800 822.600 604.600 M818 614.600 Q820.300 616.400 822.600 614.600"/></g>
<g fill="none" stroke="#222" stroke-width="1"><path d="M834 613.500 Q831.600 613.300 831.800 610.800 Q832 608.600 834 608.600 Q834.600 605.500 838 605.500 Q841 605.600 841.600 608.300 Q844 608.600 844 611 Q844 613.500 841.600 613.500 Z"/><path d="M832.600 604.300 L843.300 615.300"/></g>
<g><rect x="853" y="602.500" width="4" height="9.600" rx="2" fill="#222"/><path d="M851.300 609.500 Q851.300 614 855 614 Q858.700 614 858.700 609.500 M855 614 V616.300" fill="none" stroke="#222" stroke-width="1"/></g>
<g><rect x="868.600" y="606.600" width="9" height="6.300" fill="#222"/><rect x="877.600" y="608.300" width="1.200" height="3" fill="#222"/><path d="M866.300 604.500 V608.500 H868.300 M867.300 604.500 V606.300 M865.400 604.500 V606.300" stroke="#222" stroke-width=".8" fill="none"/></g>
<text x="896" y="606" font-size="10.5" fill="#1c1c1c" textLength="18.6" lengthAdjust="spacingAndGlyphs">14:39</text>
<text x="885.7" y="620.6" font-size="10.5" fill="#1c1c1c" textLength="40" lengthAdjust="spacingAndGlyphs">17/03/2026</text>
<g><path d="M938.600 602.500 H950 V612.300 H943 L940.300 615 V612.300 H938.600 Z" fill="#222"/><path d="M940.600 605.300 H948 M940.600 607.500 H948 M940.600 609.700 H946" stroke="#e9ebed" stroke-width=".8"/><ellipse cx="949.600" cy="615" rx="5" ry="5.600" fill="#f2f2f2" stroke="#444" stroke-width=".8"/><text x="947.6" y="618.6" font-size="9.5" fill="#222" textLength="4.2" lengthAdjust="spacingAndGlyphs">2</text></g>
</g>
</svg>
</body>
</html>
